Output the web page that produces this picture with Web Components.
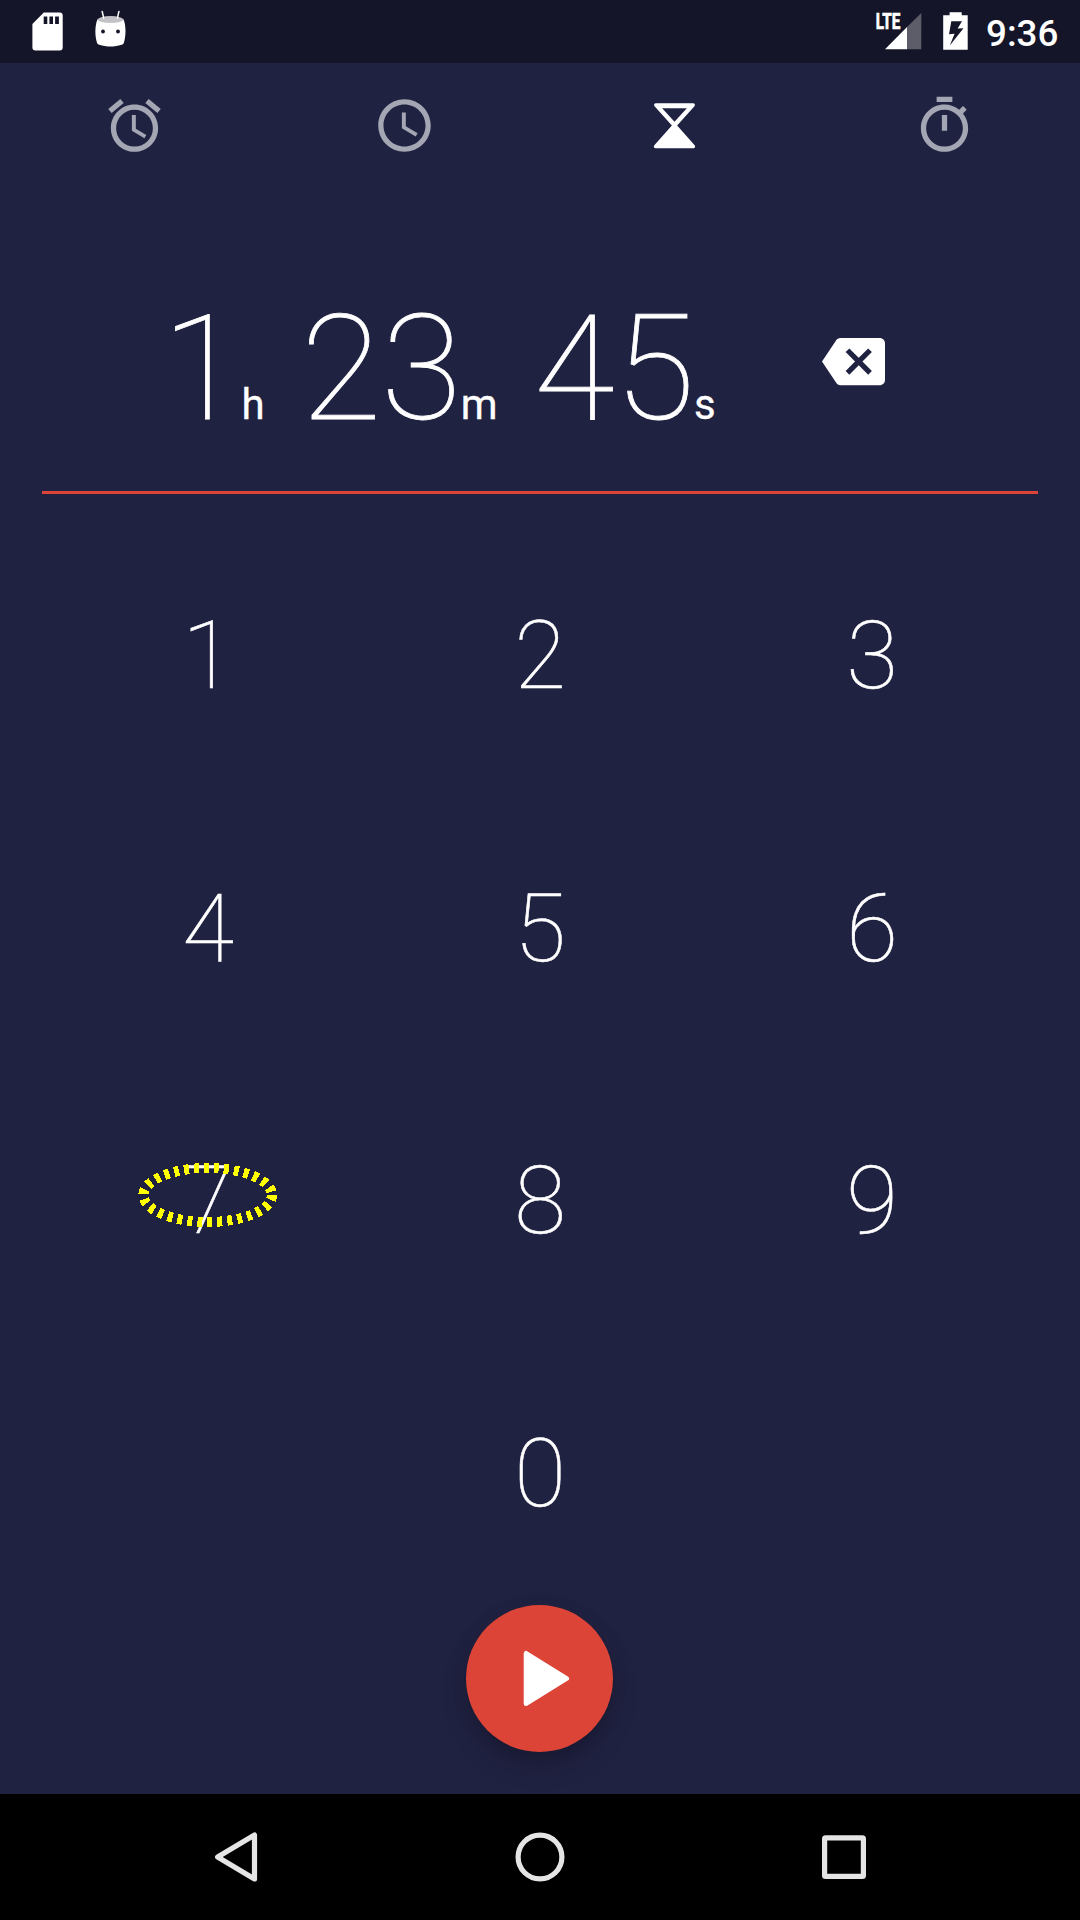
<!DOCTYPE html>
<html lang="en">
<head>
<meta charset="utf-8">
<title>Timer</title>
<style>
html,body{margin:0;padding:0}
body{width:1080px;height:1920px;overflow:hidden;background:#202242;font-family:Roboto,"Noto Sans",sans-serif;color:#fff}
</style>
</head>
<body>
<timer-app></timer-app>
<script>
const define = (name, html, setup) => customElements.define(name, class extends HTMLElement {
  constructor() {
    super();
    this.attachShadow({mode: 'open'}).innerHTML = html;
  }
  connectedCallback() { if (setup) setup(this, this.shadowRoot); }
});

const GLYPHS = {
  alarm: '<path d="M22 5.72l-4.6-3.86-1.29 1.53 4.6 3.86L22 5.72zM7.88 3.39L6.6 1.86 2 5.71l1.29 1.53 4.59-3.85zM12.5 8H11v6l4.75 2.85.75-1.23-4-2.37V8zM12 4c-4.97 0-9 4.03-9 9s4.02 9 9 9c4.97 0 9-4.03 9-9s-4.03-9-9-9zm0 16c-3.87 0-7-3.13-7-7s3.13-7 7-7 7 3.13 7 7-3.13 7-7 7z"/>',
  clock: '<path d="M11.99 2C6.47 2 2 6.48 2 12s4.47 10 9.99 10C17.52 22 22 17.52 22 12S17.52 2 11.99 2zM12 20c-4.42 0-8-3.58-8-8s3.58-8 8-8 8 3.58 8 8-3.58 8-8 8zm.5-13H11v6l5.25 3.15.75-1.23-4.5-2.67z"/>',
  hourglass: '<path fill-rule="evenodd" d="M4.9 3.5H19.1c.6 0 .9.7.5 1.2L13 12l6.6 7.4c.5.5.2 1.3-.5 1.3H4.9c-.7 0-1-.8-.5-1.3L11 12 4.4 4.7c-.4-.5-.1-1.2.5-1.2zM7.3 5.4L12 10.6l4.7-5.2z"/>',
  stopwatch: '<path d="M15 1H9v2h6V1zm-4 13h2V8h-2v6zm8.03-6.61l1.42-1.42c-.43-.51-.9-.99-1.41-1.41l-1.42 1.42C16.07 4.74 14.12 4 12 4c-4.97 0-9 4.03-9 9s4.02 9 9 9 9-4.03 9-9c0-2.12-.74-4.07-1.97-5.61zM12 20c-3.87 0-7-3.13-7-7s3.13-7 7-7 7 3.13 7 7-3.13 7-7 7z"/>',
  backspace: '<path d="M22 3H7c-.69 0-1.23.35-1.59.88L0 12l5.41 8.11c.36.53.9.89 1.59.89h15c1.1 0 2-.9 2-2V5c0-1.1-.9-2-2-2zm-3 12.59L17.59 17 14 13.41 10.41 17 9 15.59 12.59 12 9 8.41 10.41 7 14 10.59 17.59 7 19 8.41 15.41 12 19 15.59z"/>'
};

define('app-icon', '<style>:host{display:block;width:63px;height:63px}svg{display:block}</style><svg width="63" height="63" viewBox="0 0 24 24" fill="currentColor"></svg>',
  (el, root) => { root.querySelector('svg').innerHTML = GLYPHS[el.getAttribute('name')]; });

define('status-bar', `
<style>
:host{display:flex;align-items:flex-start;height:63px;background:#141528;color:#fff}
svg{display:block;flex:none}
.gap{flex:1}
.time{width:94px;height:63px;font-size:36.75px;font-weight:500;line-height:68px;white-space:nowrap}
</style>
<svg width="160" height="63" viewBox="0 0 160 63">
  <path fill="#fff" fill-rule="evenodd" d="M43.8 12.4H59.7a3 3 0 0 1 3 3V47.6a3 3 0 0 1-3 3H35.4a3 3 0 0 1-3-3V24.1zM43.7 16.5V24h3.6v-7.5zM49.4 16.5V24h3.6v-7.5zM55.1 16.5V24h3.8v-7.5z"/>
  <path fill="#fff" d="M97.4 19.5C99 17 122 17 123.6 19.5c2.6 6.5 2.4 16.5.3 23.2-.4 1.2-1.1 1.7-2.3 2-7 2.4-15.3 2.4-22.3 0-1.2-.3-1.9-.8-2.3-2-2.1-6.7-2.3-16.7.4-23.2z"/>
  <ellipse cx="110.5" cy="19.6" rx="12.8" ry="3.5" fill="#c3c3c7"/>
  <path d="M102.2 11.5l1.5 6.6M118.9 11.5l-1.5 6.6" stroke="#fff" stroke-width="1.5" stroke-linecap="round"/>
  <circle cx="103" cy="31.5" r="1.9" fill="#141528"/><circle cx="118" cy="31.5" r="1.9" fill="#141528"/>
</svg>
<div class="gap"></div>
<svg width="116" height="63" viewBox="870 0 116 63">
  <path fill="#5c5d69" d="M907 27V49.2H921.3V13z"/>
  <path fill="#fff" d="M885 49.2H907V27z"/>
  <text x="875.7" y="29" font-family="Roboto" font-weight="700" font-size="21.5" textLength="24.6" lengthAdjust="spacingAndGlyphs" fill="#fff" stroke="#fff" stroke-width=".7">LTE</text>
  <path fill="#fff" fill-rule="evenodd" d="M949.6 12.3H961.7V15.2H967.7V49.7H943.2V15.2H949.6zM951.3 21.3L949 34.3 954.6 33.8 949.8 45.5 963.5 28.3 957.6 28.6 962 21.3z"/>
</svg>
<div class="time">9:36</div>`);

define('tab-bar', `
<style>
:host{display:flex;height:125px}
div{flex:1;display:flex;align-items:flex-start;justify-content:center;color:#a5a6b3}
.on{color:#fff}
app-icon{margin:31px 1px 0 0}
</style>
<div><app-icon name="alarm"></app-icon></div>
<div><app-icon name="clock"></app-icon></div>
<div class="on"><app-icon name="hourglass"></app-icon></div>
<div><app-icon name="stopwatch"></app-icon></div>`);

define('time-part', `
<style>
:host{display:flex;align-items:baseline;white-space:nowrap}
.n{font-size:147px;font-weight:100;line-height:172px;-webkit-text-stroke:.8px #fff}
.u{font-size:42px;font-weight:400;margin-left:-1px;-webkit-text-stroke:.3px #fff}
</style><span class="n"><slot></slot></span><span class="u"></span>`,
  (el, root) => { root.querySelector('.u').textContent = el.getAttribute('unit'); });

define('timer-display', `
<style>
:host{display:flex;height:303px;margin:0 42px;border-bottom:3px solid #db4437}
.parts{display:flex;align-items:baseline;padding:95px 0 0 120px;gap:36.3px;width:661px;box-sizing:border-box}
app-icon{margin-top:142px;margin-left:119px}
</style>
<div class="parts"><time-part unit="h">1</time-part><time-part unit="m">23</time-part><time-part unit="s">45</time-part></div>
<app-icon name="backspace"></app-icon>`);

define('key-button', `
<style>
:host{display:flex;align-items:center;justify-content:center;position:relative;font-size:94.5px;font-weight:100;line-height:112px;-webkit-text-stroke:.55px #fff}
svg{position:absolute;left:90px;top:70px;display:none}
:host([marked]) svg{display:block}
</style><span><slot></slot></span>
<svg width="150" height="110" viewBox="132 1135 150 110"><ellipse cx="207.7" cy="1195" rx="64.3" ry="27" fill="none" stroke="#ff0" stroke-width="10" stroke-dasharray="5 5" shape-rendering="crispEdges"/></svg>`);

define('key-pad', `
<style>:host{display:grid;grid-template-columns:repeat(3,332px);grid-template-rows:repeat(4,272.5px);margin:26px 42px 0}
.zero{grid-column:2}</style>
${[1,2,3,4,5,6,7,8,9].map(n => `<key-button${n === 7 ? ' marked' : ''}>${n}</key-button>`).join('')}
<key-button class="zero">0</key-button>`);

define('start-button', `
<style>
:host{display:flex;align-items:center;justify-content:center;width:147px;height:147px;border-radius:50%;background:#db4437;margin:-5px 0 0 466px;box-shadow:0 14px 26px rgba(0,0,0,.2),0 2px 18px rgba(0,0,0,.08)}
svg{display:block}
</style>
<svg width="147" height="147" viewBox="0 0 147 147"><path fill="#fff" stroke="#fff" stroke-width="5" stroke-linejoin="round" d="M60.2 48.5V98.5L100.5 73.5z"/></svg>`);

define('nav-bar', `
<style>:host{display:flex;height:126px;background:#000}svg{display:block}</style>
<svg width="1080" height="126" viewBox="0 0 1080 126" fill="none" stroke="#e5e5e5" stroke-width="5.2" stroke-linejoin="round">
<path d="M217.6 63L254.5 41V85z"/>
<circle cx="540" cy="63" r="21.9"/>
<rect x="824.6" y="43.8" width="38.8" height="38.6" rx="1"/></svg>`);

define('timer-app', `
<style>:host{display:flex;flex-direction:column;width:1080px;height:1920px;background:#202242}nav-bar{margin-top:auto}</style>
<status-bar></status-bar><tab-bar></tab-bar><timer-display></timer-display><key-pad></key-pad><start-button></start-button><nav-bar></nav-bar>`);
</script>
</body>
</html>
